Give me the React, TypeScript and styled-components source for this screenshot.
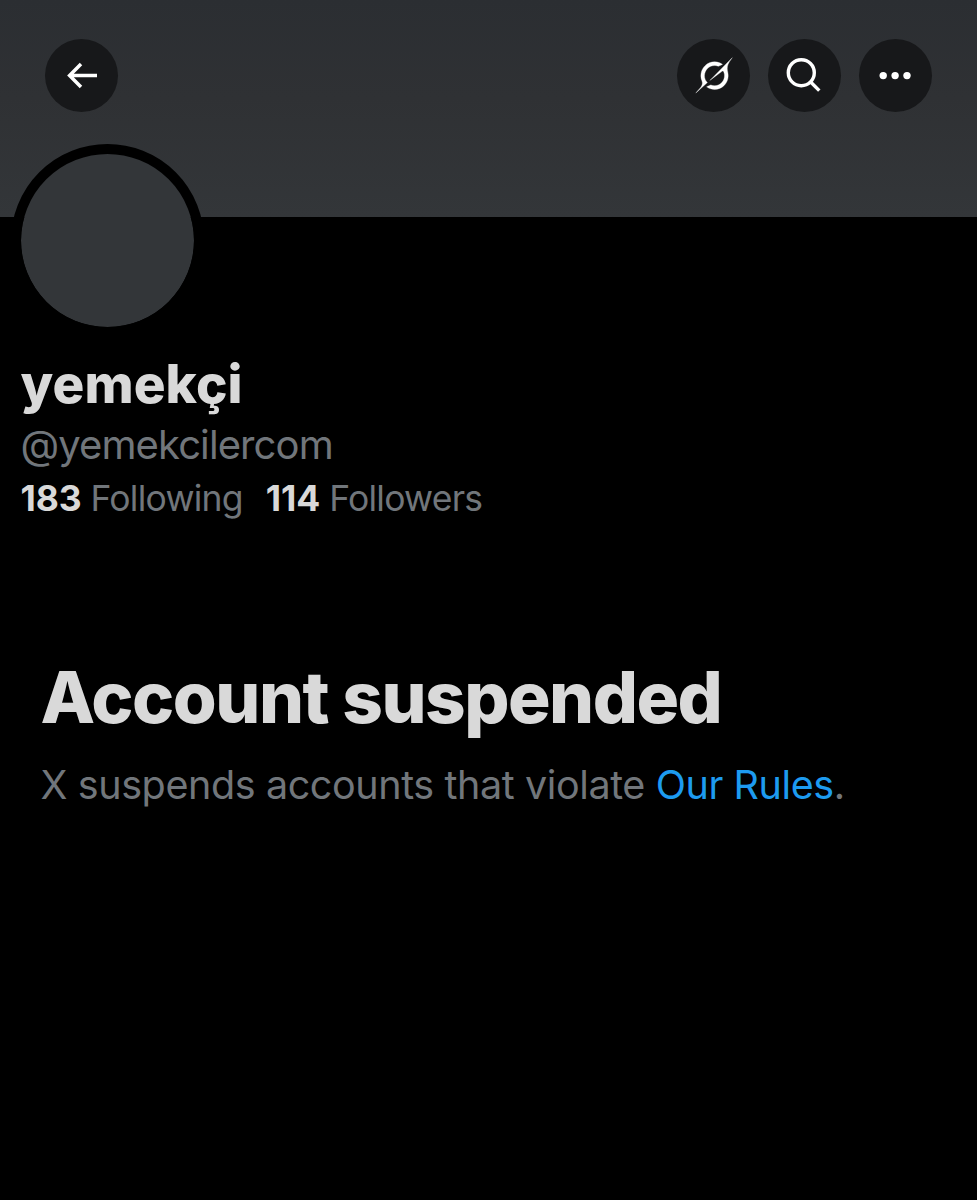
import React from "react";
import styled, { createGlobalStyle } from "styled-components";

const GlobalStyle = createGlobalStyle`
  *, *::before, *::after { box-sizing: border-box; }
  body {
    margin: 0;
    background: #000;
    font-family: Inter, "Liberation Sans", sans-serif;
    overflow-x: hidden;
  }
`;

const Page = styled.main`
  display: flex;
  flex-direction: column;
  min-height: 1200px;
  background: #000;
`;

const Banner = styled.header`
  display: flex;
  justify-content: space-between;
  align-items: flex-start;
  height: 217px;
  padding: 39px 45.5px 0 45px;
  background: linear-gradient(#2b2e32, #2f3134 45%, #333639);
`;

const Actions = styled.div`
  display: flex;
  gap: 18px;
`;

const RoundButton = styled.button`
  width: 73px;
  height: 73px;
  padding: 0;
  border: 0;
  border-radius: 50%;
  background: #17181a;
  color: #fff;

  svg { display: block; }
`;

const Profile = styled.section`
  display: flex;
  flex-direction: column;
  align-items: flex-start;
  padding-left: 20.5px;
`;

const Avatar = styled.div`
  width: 193px;
  height: 193px;
  margin: -73px 0 0 -9.5px;
  border: 10px solid #000;
  border-radius: 50%;
  background: #333639;
  background-clip: padding-box;
`;

const Name = styled.h1`
  margin: 15px 0 0;
  font-size: 53px;
  line-height: 64px;
  font-weight: 800;
  letter-spacing: 0.1px;
  color: #d9d9d9;
  white-space: nowrap;
`;

const Handle = styled.div`
  margin-top: 5px;
  font-size: 40px;
  line-height: 48px;
  font-weight: 400;
  letter-spacing: -0.9px;
  color: #71767b;
  white-space: nowrap;
`;

const Stats = styled.div`
  display: flex;
  gap: 23px;
  margin-top: 8px;
  font-size: 35.5px;
  line-height: 44px;
  color: #71767b;
  white-space: nowrap;
`;

const Stat = styled.div`
  display: flex;
  gap: 9px;
`;

const Count = styled.span`
  font-weight: 700;
  letter-spacing: -0.1px;
  color: #d9d9d9;
`;

const StatLabel = styled.span`
  font-weight: 400;
  letter-spacing: -0.75px;
`;

const Notice = styled.section`
  padding: 134px 0 0 40.5px;
`;

const NoticeTitle = styled.h2`
  margin: 0;
  font-size: 71px;
  line-height: 84px;
  font-weight: 800;
  letter-spacing: -1.5px;
  color: #d9d9d9;
  white-space: nowrap;
`;

const NoticeText = styled.p`
  margin: 22px 0 0;
  font-size: 39.5px;
  line-height: 48px;
  font-weight: 400;
  letter-spacing: -0.4px;
  color: #71767b;
  white-space: nowrap;
`;

const RulesLink = styled.a`
  color: #1d9bf0;
  text-decoration: none;
`;

const ArrowIcon = () => (
  <svg width="73" height="73" viewBox="0 0 73 73" fill="none" stroke="currentColor" strokeWidth="3.5">
    <path d="M52 36.6H25.5M36 25.1L24.6 36.6L36 48.1" />
  </svg>
);

const GrokIcon = () => (
  <svg width="73" height="73" viewBox="0 0 73 73" fill="currentColor">
    <g transform="translate(18.8 18.7) scale(1.105)">
      <path stroke="currentColor" strokeWidth="0.3" d="M12.745 20.54l10.97-8.19c.539-.4 1.307-.244 1.564.38 1.349 3.288.746 7.241-1.938 9.955-2.683 2.714-6.417 3.31-9.83 1.954l-3.728 1.745c5.347 3.697 11.84 2.782 15.898-1.324 3.219-3.255 4.216-7.692 3.284-11.693l.008.009c-1.351-5.878.332-8.227 3.782-13.031L33 0l-4.54 4.59v-.014L12.743 20.544M10.48 22.531c-3.837-3.707-3.175-9.446.1-12.755 2.42-2.449 6.388-3.448 9.852-1.979l3.72-1.737c-.67-.49-1.53-1.017-2.515-1.387-4.455-1.854-9.789-.931-13.41 2.728-3.483 3.523-4.579 8.94-2.697 13.561 1.405 3.454-.899 5.898-3.22 8.364C1.49 30.2.666 31.074 0 32l10.478-9.466" />
    </g>
  </svg>
);

const SearchIcon = () => (
  <svg width="73" height="73" viewBox="0 0 73 73" fill="none" stroke="currentColor" strokeWidth="3.4">
    <circle cx="33.3" cy="33.7" r="13" />
    <path d="M42.4 42.7L51.3 51.6" />
  </svg>
);

const MoreIcon = () => (
  <svg width="73" height="73" viewBox="0 0 73 73" fill="currentColor">
    <circle cx="24.2" cy="36.6" r="3.7" />
    <circle cx="36.1" cy="36.6" r="3.7" />
    <circle cx="48" cy="36.6" r="3.7" />
  </svg>
);

export default function App() {
  return (
    <Page>
      <GlobalStyle />
      <Banner>
        <RoundButton aria-label="Back"><ArrowIcon /></RoundButton>
        <Actions>
          <RoundButton aria-label="Grok"><GrokIcon /></RoundButton>
          <RoundButton aria-label="Search"><SearchIcon /></RoundButton>
          <RoundButton aria-label="More"><MoreIcon /></RoundButton>
        </Actions>
      </Banner>
      <Profile>
        <Avatar />
        <Name>yemekçi</Name>
        <Handle>@yemekcilercom</Handle>
        <Stats>
          <Stat><Count>183</Count><StatLabel>Following</StatLabel></Stat>
          <Stat><Count>114</Count><StatLabel>Followers</StatLabel></Stat>
        </Stats>
      </Profile>
      <Notice>
        <NoticeTitle>Account suspended</NoticeTitle>
        <NoticeText>
          X suspends accounts that violate <RulesLink>Our Rules</RulesLink>.
        </NoticeText>
      </Notice>
    </Page>
  );
}
